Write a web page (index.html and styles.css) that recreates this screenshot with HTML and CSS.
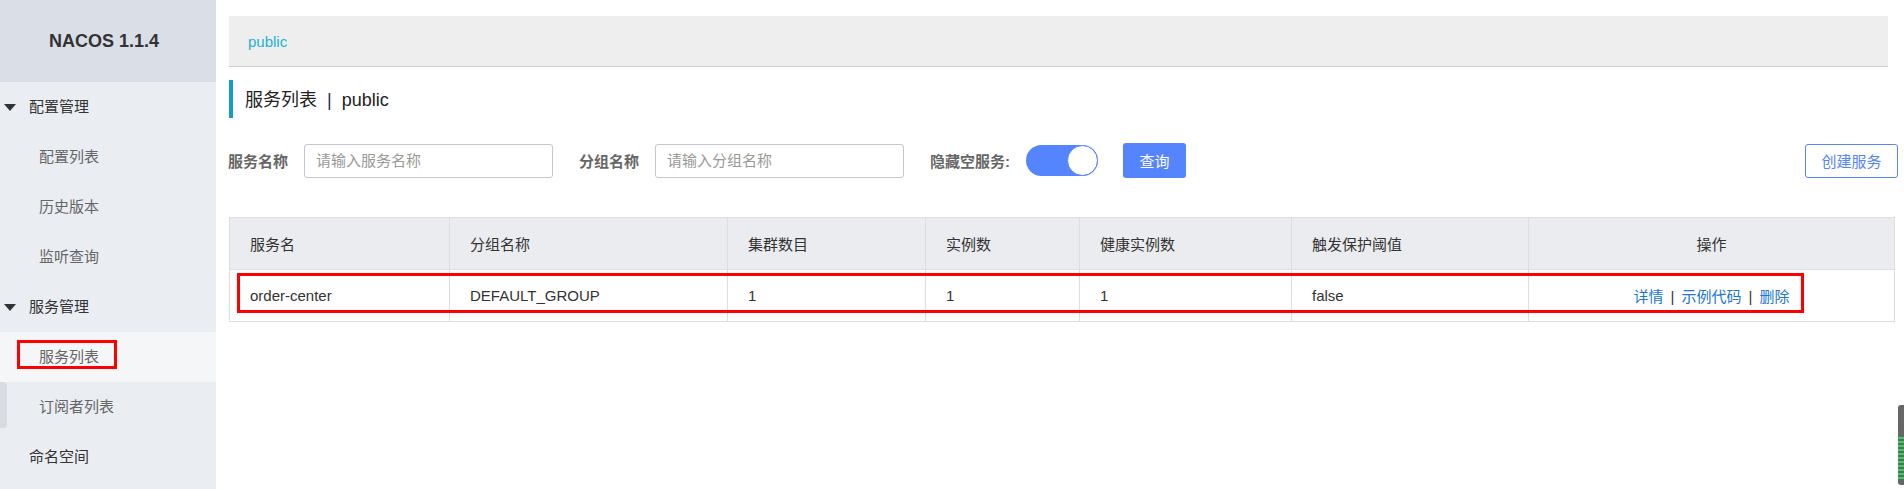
FILE: index.html
```html
<!DOCTYPE html>
<html lang="zh-CN">
<head>
    <meta charset="UTF-8">
    <meta name="viewport" content="width=device-width, initial-scale=1.0">
    <title>Nacos</title>
    <link rel="stylesheet" href="styles.css">
</head>
<body>
    <aside class="sidebar">
        <div class="logo">NACOS 1.1.4</div>
        <ul class="menu">
            <li class="menu-group"><span class="caret"></span>配置管理</li>
            <li class="menu-item">配置列表</li>
            <li class="menu-item">历史版本</li>
            <li class="menu-item">监听查询</li>
            <li class="menu-group"><span class="caret"></span>服务管理</li>
            <li class="menu-item active">服务列表</li>
            <li class="menu-item">订阅者列表</li>
            <li class="menu-group plain">命名空间</li>
        </ul>
        <div class="collapse-tab"></div>
        <div class="mark side-mark"></div>
    </aside>
    <main class="main">
        <div class="breadcrumb">public</div>
        <h2 class="page-title">服务列表<span class="sep">|</span>public</h2>
        <form class="filters">
            <label class="field-label">服务名称</label>
            <input class="field-input" type="text" placeholder="请输入服务名称">
            <label class="field-label">分组名称</label>
            <input class="field-input" type="text" placeholder="请输入分组名称">
            <label class="field-label">隐藏空服务:</label>
            <span class="switch"><span class="knob"></span></span>
            <button class="btn btn-primary" type="button">查询</button>
            <button class="btn btn-outline" type="button">创建服务</button>
        </form>
        <div class="table-wrap">
            <table class="service-table">
                <colgroup>
                    <col style="width: 220px">
                    <col style="width: 278px">
                    <col style="width: 198px">
                    <col style="width: 154px">
                    <col style="width: 212px">
                    <col style="width: 237px">
                    <col>
                </colgroup>
                <thead>
                    <tr>
                        <th>服务名</th>
                        <th>分组名称</th>
                        <th>集群数目</th>
                        <th>实例数</th>
                        <th>健康实例数</th>
                        <th>触发保护阈值</th>
                        <th class="center">操作</th>
                    </tr>
                </thead>
                <tbody>
                    <tr>
                        <td>order-center</td>
                        <td>DEFAULT_GROUP</td>
                        <td>1</td>
                        <td>1</td>
                        <td>1</td>
                        <td>false</td>
                        <td class="center actions">
                            <a href="#">详情</a><span class="bar">|</span><a href="#">示例代码</a><span class="bar">|</span><a href="#">删除</a>
                        </td>
                    </tr>
                </tbody>
            </table>
            <div class="mark row-mark"></div>
        </div>
    </main>
    <div class="meter"></div>
</body>
</html>
```

FILE: styles.css
```css
body {
    margin: 0;
    display: flex;
    min-height: 489px;
    font-family: "Liberation Sans", "Noto Sans CJK SC", sans-serif;
    font-size: 15px;
    color: #333;
    background: #fff;
    overflow: hidden;
}
.sidebar {
    position: relative;
    width: 216px;
    flex-shrink: 0;
    background: #eaedf1;
}
.logo {
    height: 82px;
    line-height: 82px;
    background: #dadee6;
    text-align: center;
    font-size: 18px;
    font-weight: bold;
    color: #333;
    padding-right: 8px;
}
.menu {
    list-style: none;
    margin: 0;
    padding: 0;
}
.menu li {
    height: 50px;
    line-height: 50px;
    white-space: nowrap;
}
.menu-group {
    display: flex;
    align-items: center;
    padding-left: 4px;
    color: #333;
}
.menu-group.plain {
    padding-left: 29px;
}
.caret {
    width: 0;
    height: 0;
    border-left: 6px solid transparent;
    border-right: 6px solid transparent;
    border-top: 7px solid #333;
    margin-right: 13px;
}
.menu-item {
    padding-left: 39px;
    color: #666;
}
.menu-item.active {
    background: #f5f6f8;
}
.collapse-tab {
    position: absolute;
    left: 0;
    top: 382px;
    width: 7px;
    height: 46px;
    background: #d8dbe2;
    border-radius: 0 4px 4px 0;
}
.mark {
    position: absolute;
    border: 3px solid #ff0000;
    box-sizing: border-box;
}
.side-mark {
    left: 17px;
    top: 340px;
    width: 100px;
    height: 29px;
}
.main {
    flex: 1;
    padding: 16px 6px 0 13px;
    min-width: 0;
}
.breadcrumb {
    height: 50px;
    line-height: 52px;
    margin-right: 10px;
    padding-left: 19px;
    background: #eeeeee;
    border-bottom: 1px solid #cccccc;
    color: #1cb2d8;
}
.page-title {
    margin: 13px 0 0;
    height: 38px;
    line-height: 40px;
    border-left: 4px solid #119bd1;
    padding-left: 12px;
    font-size: 18px;
    font-weight: normal;
    color: #222;
}
.sep {
    margin: 0 10px;
    color: #1d2a5a;
}
.filters {
    display: flex;
    align-items: center;
    margin: 25px 0 0;
    height: 35px;
}
.field-label {
    font-weight: bold;
    color: #666;
    margin-right: 16px;
    white-space: nowrap;
}
.field-label:first-child {
    margin-left: -1px;
}
.field-input {
    width: 249px;
    height: 34px;
    box-sizing: border-box;
    border: 1px solid #c4c6cf;
    border-radius: 3px;
    padding: 0 11px;
    font-family: inherit;
    font-size: 15px;
    color: #333;
    margin-right: 26px;
    outline: none;
}
.field-input::placeholder {
    color: #999;
}
.switch {
    position: relative;
    width: 72px;
    height: 31px;
    border-radius: 16px;
    background: #5584ff;
    margin-right: 25px;
}
.knob {
    position: absolute;
    right: 0;
    top: 0;
    width: 31px;
    height: 31px;
    box-sizing: border-box;
    border-radius: 50%;
    background: #fff;
    border: 1px solid #5584ff;
}
.btn {
    height: 35px;
    border-radius: 3px;
    font-family: inherit;
    font-size: 15px;
    padding: 0;
    cursor: pointer;
}
.btn-primary {
    width: 63px;
    background: #5584ff;
    border: none;
    color: #fff;
}
.btn-outline {
    width: 93px;
    height: 34px;
    margin-left: auto;
    background: #fff;
    border: 1px solid #5584ff;
    color: #5584ff;
}
.table-wrap {
    position: relative;
    margin: 39px 3px 0 0;
}
.service-table {
    width: 100%;
    border-collapse: collapse;
    table-layout: fixed;
}
.service-table th,
.service-table td {
    height: 51px;
    padding: 0 0 0 20px;
    border: 1px solid #dcdee3;
    text-align: left;
    font-weight: normal;
    color: #333;
    white-space: nowrap;
}
.service-table th {
    background: #ebecf0;
}
.service-table .center {
    text-align: center;
    padding-left: 0;
}
.actions a {
    color: #2077d1;
    text-decoration: none;
}
.actions .bar {
    margin: 0 7px;
    color: #333;
}
.row-mark {
    left: 8px;
    top: 56px;
    width: 1567px;
    height: 40px;
}
.meter {
    position: absolute;
    right: 0;
    top: 405px;
    width: 6px;
    height: 80px;
    border-radius: 3px 0 0 3px;
    background: repeating-linear-gradient(to bottom, #2ed35a 0 2px, #666 2px 4px) 0 32px / 100% 44px no-repeat, #666;
}
```
